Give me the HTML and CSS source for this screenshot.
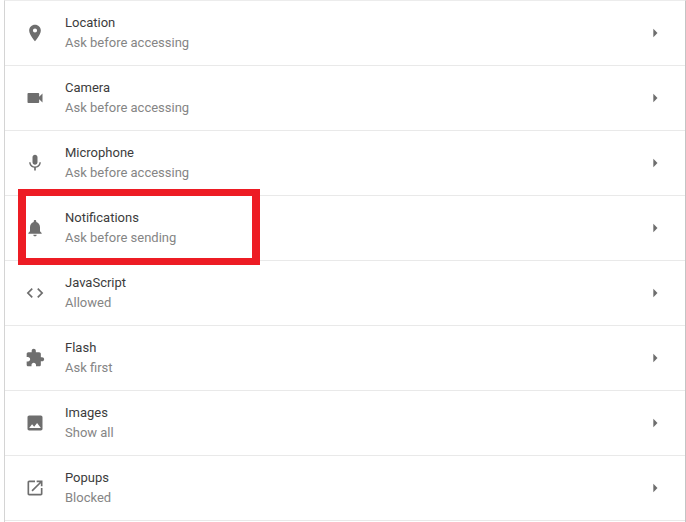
FILE: index.html
```html
<!DOCTYPE html>
<html lang="en">
<head>
    <meta charset="UTF-8">
    <meta name="viewport" content="width=device-width, initial-scale=1.0">
    <title>Site settings</title>
    <link rel="stylesheet" href="styles.css">
</head>
<body>
    <div class="list">
        <div class="row">
            <svg class="icon" viewBox="0 0 24 24"><path d="M12 2C8.130 2 5 5.130 5 9c0 5.250 7 13 7 13s7-7.750 7-13c0-3.870-3.130-7-7-7zm0 9.500a2.500 2.500 0 0 1 0-5 2.500 2.500 0 0 1 0 5z"/></svg>
            <div class="text">
                <div class="title">Location</div>
                <div class="sub">Ask before accessing</div>
            </div>
            <svg class="arrow" viewBox="0 0 24 24"><path d="M10 17l5-5-5-5v10z"/></svg>
        </div>
        <div class="row">
            <svg class="icon" viewBox="0 0 24 24"><path d="M17 10.500V7c0-.550-.450-1-1-1H4c-.550 0-1 .450-1 1v10c0 .550.450 1 1 1h12c.550 0 1-.450 1-1v-3.500l4 4v-11l-4 4z"/></svg>
            <div class="text">
                <div class="title">Camera</div>
                <div class="sub">Ask before accessing</div>
            </div>
            <svg class="arrow" viewBox="0 0 24 24"><path d="M10 17l5-5-5-5v10z"/></svg>
        </div>
        <div class="row">
            <svg class="icon" viewBox="0 0 24 24"><path d="M12 14c1.660 0 2.990-1.340 2.990-3L15 5c0-1.660-1.340-3-3-3S9 3.340 9 5v6c0 1.660 1.340 3 3 3zm5.300-3c0 3-2.540 5.100-5.300 5.100S6.700 14 6.700 11H5c0 3.410 2.720 6.230 6 6.720V21h2v-3.280c3.280-.480 6-3.300 6-6.720h-1.700z"/></svg>
            <div class="text">
                <div class="title">Microphone</div>
                <div class="sub">Ask before accessing</div>
            </div>
            <svg class="arrow" viewBox="0 0 24 24"><path d="M10 17l5-5-5-5v10z"/></svg>
        </div>
        <div class="row">
            <svg class="icon" viewBox="0 0 24 24"><path d="M12 22c1.100 0 2-.9 2-2h-4c0 1.100.890 2 2 2zm6-6v-5c0-3.070-1.640-5.640-4.500-6.320V4c0-.830-.670-1.500-1.500-1.500s-1.500.670-1.500 1.500v.680C7.630 5.360 6 7.920 6 11v5l-2 2v1h16v-1l-2-2z"/></svg>
            <div class="text">
                <div class="title">Notifications</div>
                <div class="sub">Ask before sending</div>
            </div>
            <svg class="arrow" viewBox="0 0 24 24"><path d="M10 17l5-5-5-5v10z"/></svg>
        </div>
        <div class="row">
            <svg class="icon" viewBox="0 0 24 24"><path d="M9.400 16.600L4.800 12l4.600-4.600L8 6l-6 6 6 6 1.400-1.400zm5.200 0l4.600-4.600-4.600-4.600L16 6l6 6-6 6-1.400-1.400z"/></svg>
            <div class="text">
                <div class="title">JavaScript</div>
                <div class="sub">Allowed</div>
            </div>
            <svg class="arrow" viewBox="0 0 24 24"><path d="M10 17l5-5-5-5v10z"/></svg>
        </div>
        <div class="row">
            <svg class="icon" viewBox="0 0 24 24"><path d="M20.500 11H19V7c0-1.100-.9-2-2-2h-4V3.500C13 2.120 11.880 1 10.500 1S8 2.120 8 3.500V5H4c-1.100 0-1.990.9-1.990 2v3.800H3.500c1.490 0 2.700 1.210 2.700 2.700s-1.210 2.700-2.700 2.700H2V20c0 1.100.9 2 2 2h3.800v-1.500c0-1.490 1.210-2.700 2.700-2.700 1.490 0 2.700 1.210 2.700 2.700V22H17c1.100 0 2-.9 2-2v-4h1.500c1.380 0 2.500-1.120 2.500-2.500S21.880 11 20.500 11z"/></svg>
            <div class="text">
                <div class="title">Flash</div>
                <div class="sub">Ask first</div>
            </div>
            <svg class="arrow" viewBox="0 0 24 24"><path d="M10 17l5-5-5-5v10z"/></svg>
        </div>
        <div class="row">
            <svg class="icon" viewBox="0 0 24 24"><path d="M21 19V5c0-1.100-.9-2-2-2H5c-1.100 0-2 .9-2 2v14c0 1.100.9 2 2 2h14c1.100 0 2-.9 2-2zM8.500 13.500l2.500 3.010L14.500 12l4.500 6H5l3.500-4.500z"/></svg>
            <div class="text">
                <div class="title">Images</div>
                <div class="sub">Show all</div>
            </div>
            <svg class="arrow" viewBox="0 0 24 24"><path d="M10 17l5-5-5-5v10z"/></svg>
        </div>
        <div class="row">
            <svg class="icon" viewBox="0 0 24 24"><path d="M19 19H5V5h7V3H5c-1.110 0-2 .9-2 2v14c0 1.100.890 2 2 2h14c1.100 0 2-.9 2-2v-7h-2v7zM14 3v2h3.590l-9.830 9.830 1.410 1.410L19 6.410V10h2V3h-7z"/></svg>
            <div class="text">
                <div class="title">Popups</div>
                <div class="sub">Blocked</div>
            </div>
            <svg class="arrow" viewBox="0 0 24 24"><path d="M10 17l5-5-5-5v10z"/></svg>
        </div>
    </div>
    <div class="highlight"></div>
</body>
</html>
```

FILE: styles.css
```css
html, body {
    height: 100%;
}
body {
    margin: 0;
    overflow: hidden;
    position: relative;
    background-color: #fff;
    font-family: Roboto, "Liberation Sans", sans-serif;
}
.list {
    margin-left: 4px;
    height: 522px;
    box-sizing: border-box;
    border-left: 1px solid #d4d4d4;
    border-right: 1px solid #c4c4c4;
    border-top: 1px solid #ececec;
}
.row {
    display: flex;
    align-items: center;
    height: 64px;
    padding: 0 20px;
    border-bottom: 1px solid #e9e9e9;
}
.icon {
    width: 20px;
    height: 20px;
    fill: #6e6e6e;
    flex-shrink: 0;
}
.text {
    flex: 1;
    margin-left: 20px;
}
.title {
    font-size: 13px;
    line-height: 20px;
    color: #3c3c3c;
}
.sub {
    font-size: 13px;
    line-height: 20px;
    color: #858585;
}
.arrow {
    width: 20px;
    height: 20px;
    fill: #6e6e6e;
    flex-shrink: 0;
}
.highlight {
    position: absolute;
    left: 18px;
    top: 189px;
    width: 242px;
    height: 76px;
    box-sizing: border-box;
    border: 7px solid #ed1c24;
    border-left-width: 8px;
    border-right-width: 8px;
}
```
